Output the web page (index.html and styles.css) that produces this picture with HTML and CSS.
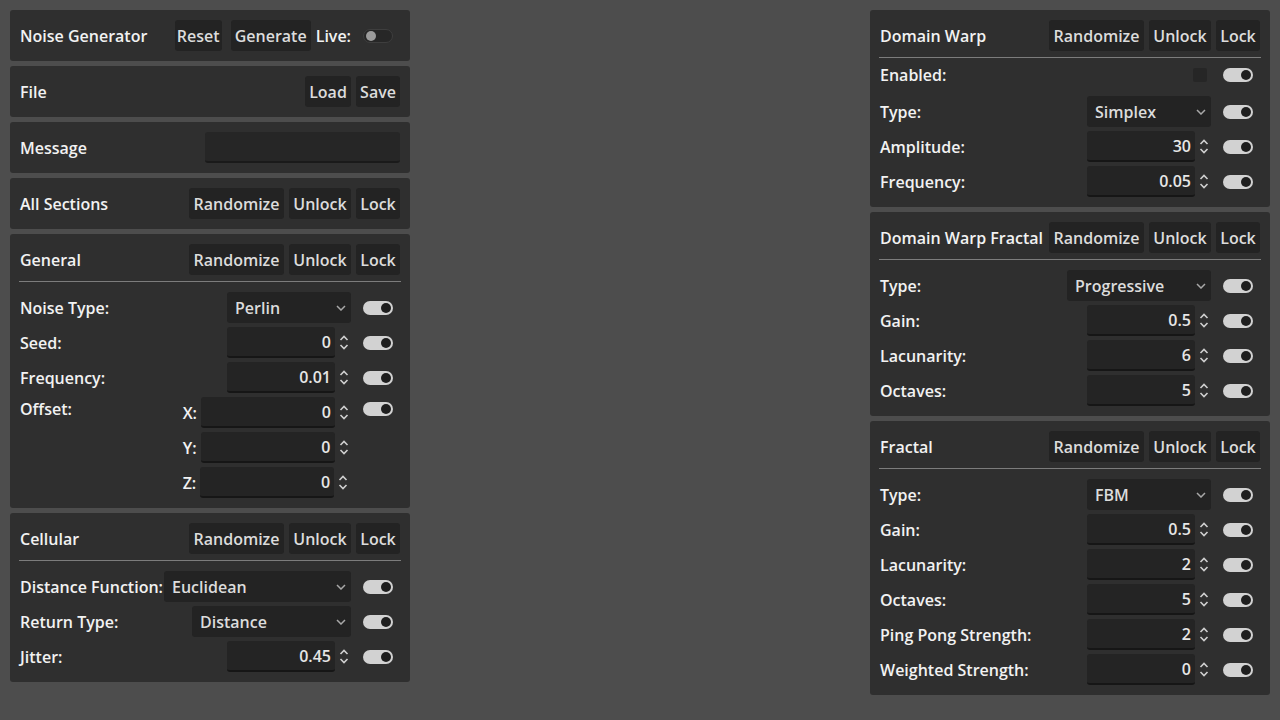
FILE: index.html
```html
<!DOCTYPE html>
<html>
<head>
<meta charset="utf-8">
<link rel="stylesheet" href="styles.css">
</head>
<body>
<div class="layout">
  <div class="col">
    <div class="panel">
      <div class="head">
        <div class="title">Noise Generator</div>
        <div class="btn w47">Reset</div>
        <div class="btn w80 gapl">Generate</div>
        <div class="live">Live:</div>
        <div class="tcell"><span class="tog off"></span></div>
      </div>
    </div>
    <div class="panel">
      <div class="head">
        <div class="title">File</div>
        <div class="btn w46">Load</div>
        <div class="btn w44">Save</div>
      </div>
    </div>
    <div class="panel">
      <div class="head">
        <div class="title">Message</div>
        <div class="lineedit"></div>
      </div>
    </div>
    <div class="panel">
      <div class="head">
        <div class="title">All Sections</div>
        <div class="btn w95">Randomize</div>
        <div class="btn w62">Unlock</div>
        <div class="btn w44">Lock</div>
      </div>
    </div>
    <div class="panel">
      <div class="head">
        <div class="title">General</div>
        <div class="btn w95">Randomize</div>
        <div class="btn w62">Unlock</div>
        <div class="btn w44">Lock</div>
      </div>
      <div class="sep"></div>
      <div class="rows">
        <div class="row">
          <div class="label">Noise Type:</div>
          <div class="select w124"><span>Perlin</span><svg class="chev" width="10" height="6" viewBox="0 0 10 6"><path d="M1 1 L5 5 L9 1" fill="none" stroke="#a8a8a8" stroke-width="1.5"/></svg></div>
          <div class="tcell"><span class="tog"></span></div>
        </div>
        <div class="row">
          <div class="label">Seed:</div>
          <div class="spin"><div class="field">0</div><svg class="arr" width="10" height="15" viewBox="0 0 10 15"><path d="M1.5 5 L5 1.5 L8.5 5 M1.5 10 L5 13.5 L8.5 10" fill="none" stroke="#cfcfcf" stroke-width="1.6"/></svg></div>
          <div class="tcell"><span class="tog"></span></div>
        </div>
        <div class="row">
          <div class="label">Frequency:</div>
          <div class="spin"><div class="field">0.01</div><svg class="arr" width="10" height="15" viewBox="0 0 10 15"><path d="M1.5 5 L5 1.5 L8.5 5 M1.5 10 L5 13.5 L8.5 10" fill="none" stroke="#cfcfcf" stroke-width="1.6"/></svg></div>
          <div class="tcell"><span class="tog"></span></div>
        </div>
        <div class="row row-multi">
          <div class="label label-top">Offset:</div>
          <div class="xyz">
            <div class="xyzrow"><span class="axis">X:</span><div class="spin w150"><div class="field">0</div><svg class="arr" width="10" height="15" viewBox="0 0 10 15"><path d="M1.5 5 L5 1.5 L8.5 5 M1.5 10 L5 13.5 L8.5 10" fill="none" stroke="#cfcfcf" stroke-width="1.6"/></svg></div></div>
            <div class="xyzrow"><span class="axis">Y:</span><div class="spin w150"><div class="field">0</div><svg class="arr" width="10" height="15" viewBox="0 0 10 15"><path d="M1.5 5 L5 1.5 L8.5 5 M1.5 10 L5 13.5 L8.5 10" fill="none" stroke="#cfcfcf" stroke-width="1.6"/></svg></div></div>
            <div class="xyzrow"><span class="axis">Z:</span><div class="spin w150"><div class="field">0</div><svg class="arr" width="10" height="15" viewBox="0 0 10 15"><path d="M1.5 5 L5 1.5 L8.5 5 M1.5 10 L5 13.5 L8.5 10" fill="none" stroke="#cfcfcf" stroke-width="1.6"/></svg></div></div>
          </div>
          <div class="tcell tcell-top"><span class="tog"></span></div>
        </div>
      </div>
    </div>
    <div class="panel">
      <div class="head">
        <div class="title">Cellular</div>
        <div class="btn w95">Randomize</div>
        <div class="btn w62">Unlock</div>
        <div class="btn w44">Lock</div>
      </div>
      <div class="sep"></div>
      <div class="rows">
        <div class="row">
          <div class="label">Distance Function:</div>
          <div class="select w187"><span>Euclidean</span><svg class="chev" width="10" height="6" viewBox="0 0 10 6"><path d="M1 1 L5 5 L9 1" fill="none" stroke="#a8a8a8" stroke-width="1.5"/></svg></div>
          <div class="tcell"><span class="tog"></span></div>
        </div>
        <div class="row">
          <div class="label">Return Type:</div>
          <div class="select w159"><span>Distance</span><svg class="chev" width="10" height="6" viewBox="0 0 10 6"><path d="M1 1 L5 5 L9 1" fill="none" stroke="#a8a8a8" stroke-width="1.5"/></svg></div>
          <div class="tcell"><span class="tog"></span></div>
        </div>
        <div class="row">
          <div class="label">Jitter:</div>
          <div class="spin"><div class="field">0.45</div><svg class="arr" width="10" height="15" viewBox="0 0 10 15"><path d="M1.5 5 L5 1.5 L8.5 5 M1.5 10 L5 13.5 L8.5 10" fill="none" stroke="#cfcfcf" stroke-width="1.6"/></svg></div>
          <div class="tcell"><span class="tog"></span></div>
        </div>
      </div>
    </div>
  </div>

  <div class="col">
    <div class="panel">
      <div class="head">
        <div class="title">Domain Warp</div>
        <div class="btn w95">Randomize</div>
        <div class="btn w62">Unlock</div>
        <div class="btn w44">Lock</div>
      </div>
      <div class="sep"></div>
      <div class="rows">
        <div class="row row-enabled">
          <div class="label">Enabled:</div>
          <span class="checkbox"></span>
          <div class="tcell"><span class="tog"></span></div>
        </div>
        <div class="row">
          <div class="label">Type:</div>
          <div class="select w124"><span>Simplex</span><svg class="chev" width="10" height="6" viewBox="0 0 10 6"><path d="M1 1 L5 5 L9 1" fill="none" stroke="#a8a8a8" stroke-width="1.5"/></svg></div>
          <div class="tcell"><span class="tog"></span></div>
        </div>
        <div class="row">
          <div class="label">Amplitude:</div>
          <div class="spin"><div class="field">30</div><svg class="arr" width="10" height="15" viewBox="0 0 10 15"><path d="M1.5 5 L5 1.5 L8.5 5 M1.5 10 L5 13.5 L8.5 10" fill="none" stroke="#cfcfcf" stroke-width="1.6"/></svg></div>
          <div class="tcell"><span class="tog"></span></div>
        </div>
        <div class="row">
          <div class="label">Frequency:</div>
          <div class="spin"><div class="field">0.05</div><svg class="arr" width="10" height="15" viewBox="0 0 10 15"><path d="M1.5 5 L5 1.5 L8.5 5 M1.5 10 L5 13.5 L8.5 10" fill="none" stroke="#cfcfcf" stroke-width="1.6"/></svg></div>
          <div class="tcell"><span class="tog"></span></div>
        </div>
      </div>
    </div>
    <div class="panel">
      <div class="head">
        <div class="title">Domain Warp Fractal</div>
        <div class="btn w95">Randomize</div>
        <div class="btn w62">Unlock</div>
        <div class="btn w44">Lock</div>
      </div>
      <div class="sep"></div>
      <div class="rows">
        <div class="row">
          <div class="label">Type:</div>
          <div class="select w144"><span>Progressive</span><svg class="chev" width="10" height="6" viewBox="0 0 10 6"><path d="M1 1 L5 5 L9 1" fill="none" stroke="#a8a8a8" stroke-width="1.5"/></svg></div>
          <div class="tcell"><span class="tog"></span></div>
        </div>
        <div class="row">
          <div class="label">Gain:</div>
          <div class="spin"><div class="field">0.5</div><svg class="arr" width="10" height="15" viewBox="0 0 10 15"><path d="M1.5 5 L5 1.5 L8.5 5 M1.5 10 L5 13.5 L8.5 10" fill="none" stroke="#cfcfcf" stroke-width="1.6"/></svg></div>
          <div class="tcell"><span class="tog"></span></div>
        </div>
        <div class="row">
          <div class="label">Lacunarity:</div>
          <div class="spin"><div class="field">6</div><svg class="arr" width="10" height="15" viewBox="0 0 10 15"><path d="M1.5 5 L5 1.5 L8.5 5 M1.5 10 L5 13.5 L8.5 10" fill="none" stroke="#cfcfcf" stroke-width="1.6"/></svg></div>
          <div class="tcell"><span class="tog"></span></div>
        </div>
        <div class="row">
          <div class="label">Octaves:</div>
          <div class="spin"><div class="field">5</div><svg class="arr" width="10" height="15" viewBox="0 0 10 15"><path d="M1.5 5 L5 1.5 L8.5 5 M1.5 10 L5 13.5 L8.5 10" fill="none" stroke="#cfcfcf" stroke-width="1.6"/></svg></div>
          <div class="tcell"><span class="tog"></span></div>
        </div>
      </div>
    </div>
    <div class="panel">
      <div class="head">
        <div class="title">Fractal</div>
        <div class="btn w95">Randomize</div>
        <div class="btn w62">Unlock</div>
        <div class="btn w44">Lock</div>
      </div>
      <div class="sep"></div>
      <div class="rows">
        <div class="row">
          <div class="label">Type:</div>
          <div class="select w124"><span>FBM</span><svg class="chev" width="10" height="6" viewBox="0 0 10 6"><path d="M1 1 L5 5 L9 1" fill="none" stroke="#a8a8a8" stroke-width="1.5"/></svg></div>
          <div class="tcell"><span class="tog"></span></div>
        </div>
        <div class="row">
          <div class="label">Gain:</div>
          <div class="spin"><div class="field">0.5</div><svg class="arr" width="10" height="15" viewBox="0 0 10 15"><path d="M1.5 5 L5 1.5 L8.5 5 M1.5 10 L5 13.5 L8.5 10" fill="none" stroke="#cfcfcf" stroke-width="1.6"/></svg></div>
          <div class="tcell"><span class="tog"></span></div>
        </div>
        <div class="row">
          <div class="label">Lacunarity:</div>
          <div class="spin"><div class="field">2</div><svg class="arr" width="10" height="15" viewBox="0 0 10 15"><path d="M1.5 5 L5 1.5 L8.5 5 M1.5 10 L5 13.5 L8.5 10" fill="none" stroke="#cfcfcf" stroke-width="1.6"/></svg></div>
          <div class="tcell"><span class="tog"></span></div>
        </div>
        <div class="row">
          <div class="label">Octaves:</div>
          <div class="spin"><div class="field">5</div><svg class="arr" width="10" height="15" viewBox="0 0 10 15"><path d="M1.5 5 L5 1.5 L8.5 5 M1.5 10 L5 13.5 L8.5 10" fill="none" stroke="#cfcfcf" stroke-width="1.6"/></svg></div>
          <div class="tcell"><span class="tog"></span></div>
        </div>
        <div class="row">
          <div class="label">Ping Pong Strength:</div>
          <div class="spin"><div class="field">2</div><svg class="arr" width="10" height="15" viewBox="0 0 10 15"><path d="M1.5 5 L5 1.5 L8.5 5 M1.5 10 L5 13.5 L8.5 10" fill="none" stroke="#cfcfcf" stroke-width="1.6"/></svg></div>
          <div class="tcell"><span class="tog"></span></div>
        </div>
        <div class="row">
          <div class="label">Weighted Strength:</div>
          <div class="spin"><div class="field">0</div><svg class="arr" width="10" height="15" viewBox="0 0 10 15"><path d="M1.5 5 L5 1.5 L8.5 5 M1.5 10 L5 13.5 L8.5 10" fill="none" stroke="#cfcfcf" stroke-width="1.6"/></svg></div>
          <div class="tcell"><span class="tog"></span></div>
        </div>
      </div>
    </div>
  </div>
</div>
</body>
</html>
```

FILE: styles.css
```css
* { box-sizing: border-box; }
html, body { margin: 0; padding: 0; }
body {
  background: #4d4d4d;
  font-family: "Open Sans", "Noto Sans", sans-serif;
  font-weight: 600;
  font-size: 16px;
  color: #f2f2f2;
  width: 1280px;
  height: 720px;
  overflow: hidden;
}
.layout {
  display: flex;
  justify-content: space-between;
  align-items: flex-start;
  padding: 10px;
}
.col {
  width: 400px;
  display: flex;
  flex-direction: column;
  gap: 5px;
}
.panel {
  background: #2f2f2f;
  border-radius: 3px;
  padding: 10px;
}
.head {
  display: flex;
  align-items: center;
  gap: 5px;
  height: 31px;
}
.title {
  flex: 1;
  white-space: nowrap;
}
.btn {
  height: 31px;
  background: #232323;
  border-radius: 3px;
  color: #dcdcdc;
  display: flex;
  align-items: center;
  justify-content: center;
  white-space: nowrap;
}
.w44 { width: 44px; }
.w46 { width: 46px; }
.w47 { width: 47px; }
.w62 { width: 62px; }
.w80 { width: 80px; }
.w95 { width: 95px; }
.gapl { margin-left: 4px; }
.live { margin-left: 0; }
.lineedit {
  width: 195px;
  height: 31px;
  background: #262626;
  border-radius: 3px;
  border-bottom: 2px solid #1a1a1a;
}
.sep {
  height: 1px;
  background: #7c7c7c;
  margin: 6px -1px 10px -1px;
}
.rows {
  display: flex;
  flex-direction: column;
  gap: 4px;
}
.row {
  display: flex;
  align-items: center;
  gap: 5px;
  height: 31px;
}
.label {
  flex: 1 1 0;
  min-width: 0;
  white-space: nowrap;
}
.select {
  flex: none;
  height: 31px;
  background: #232323;
  border-radius: 3px;
  display: flex;
  align-items: center;
  justify-content: space-between;
  padding: 0 5px 0 8px;
  color: #dcdcdc;
  white-space: nowrap;
}
.w124 { width: 124px; }
.w144 { width: 144px; }
.w159 { width: 159px; }
.w187 { width: 187px; }
.chev { display: block; }
.spin {
  flex: none;
  width: 124px;
  height: 31px;
  display: flex;
  align-items: center;
}
.spin.w150 { width: 150px; }
.field {
  flex: 1;
  height: 31px;
  background: #242424;
  border-radius: 3px;
  border-bottom: 2px solid #161616;
  display: flex;
  align-items: center;
  justify-content: flex-end;
  padding: 0 4px 0 8px;
  color: #e6e6e6;
}
.arr {
  display: block;
  margin: 0 2px 0 4px;
}
.tcell {
  flex: none;
  width: 44px;
  height: 31px;
  display: flex;
  align-items: center;
  padding-left: 7px;
}
.tog {
  position: relative;
  display: block;
  width: 30px;
  height: 14px;
  border-radius: 7px;
  background: #d2d2d2;
}
.tog::after {
  content: "";
  position: absolute;
  right: 2px;
  top: 2px;
  width: 10px;
  height: 10px;
  border-radius: 50%;
  background: #1e1e1e;
}
.tog.off {
  background: #272727;
  border: 1px solid #3e3e3e;
}
.tog.off::after {
  right: auto;
  left: 2px;
  top: 1px;
  background: #9c9c9c;
}
.row-multi {
  height: auto;
  align-items: flex-start;
}
.label-top { line-height: 24px; }
.tcell-top { height: 24px; }
.xyz {
  display: flex;
  flex-direction: column;
  gap: 4px;
}
.xyzrow {
  display: flex;
  align-items: center;
  gap: 4px;
}
.axis { color: #f2f2f2; }
.row-enabled {
  height: 24px;
  margin-top: -5px;
  margin-bottom: 5px;
}
.checkbox {
  flex: none;
  width: 14px;
  height: 14px;
  border-radius: 2px;
  background: #262626;
  margin-right: 4px;
}
```
